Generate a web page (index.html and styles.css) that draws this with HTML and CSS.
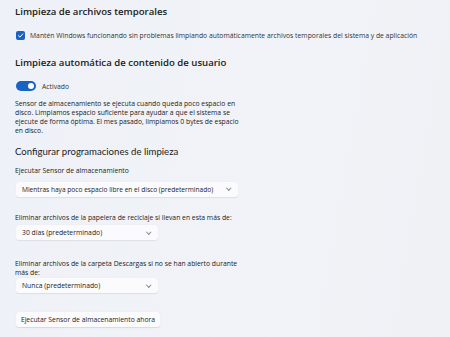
FILE: index.html
```html
<!DOCTYPE html>
<html lang="es">
<head>
  <meta charset="UTF-8" />
  <title>Sensor de almacenamiento</title>
  <link rel="stylesheet" href="styles.css">
</head>
<body>
  <h2 class="title">Limpieza de archivos temporales</h2>
  <label class="check-row">
    <span class="checkbox">
      <svg width="7" height="7" viewBox="0 0 10 10"><path d="M2 5.2 L4.2 7.3 L8.2 2.8" fill="none" stroke="#fff" stroke-width="1.4" stroke-linecap="round" stroke-linejoin="round"/></svg>
    </span>
    Mantén Windows funcionando sin problemas limpiando automáticamente archivos temporales del sistema y de aplicación
  </label>

  <h2 class="title second">Limpieza automática de contenido de usuario</h2>
  <div class="toggle-row">
    <span class="toggle"><span class="knob"></span></span>
    Activado
  </div>
  <p class="desc">Sensor de almacenamiento se ejecuta cuando queda poco espacio en disco. Limpiamos espacio suficiente para ayudar a que el sistema se ejecute de forma óptima. El mes pasado, limpiamos 0 bytes de espacio en disco.</p>

  <h3 class="subtitle">Configurar programaciones de limpieza</h3>

  <div class="field first">
    <div class="label">Ejecutar Sensor de almacenamiento</div>
    <div class="select wide">Mientras haya poco espacio libre en el disco (predeterminado) <span class="chev"></span></div>
  </div>

  <div class="field">
    <div class="label">Eliminar archivos de la papelera de reciclaje si llevan en esta más de:</div>
    <div class="select">30 días (predeterminado) <span class="chev"></span></div>
  </div>

  <div class="field last">
    <div class="label">Eliminar archivos de la carpeta Descargas si no se han abierto durante más de:</div>
    <div class="select">Nunca (predeterminado) <span class="chev"></span></div>
  </div>

  <button class="run">Ejecutar Sensor de almacenamiento ahora</button>
</body>
</html>
```

FILE: styles.css
```css
body {
  margin: 0;
  padding: 4px 0 0 15px;
  background: linear-gradient(100deg, #eef1f7 0%, #f1f3f8 60%, #eff1f5 100%);
  color: #1b1b1b;
  font-family: 'Open Sans', sans-serif;
  font-size: 6.8px;
  height: 337px;
  box-sizing: border-box;
  overflow: hidden;
}
.title {
  margin: 0;
  font-size: 9.6px;
  font-weight: 600;
  line-height: 16px;
  color: #202020;
}
.title.second {
  margin-top: 15px;
}
.check-row {
  display: flex;
  align-items: center;
  gap: 5px;
  margin-top: 11px;
  padding-left: 1px;
  color: #333;
}
.checkbox {
  width: 9px;
  height: 9px;
  border-radius: 2px;
  background: #1863c4;
  display: flex;
  align-items: center;
  justify-content: center;
}
.toggle-row {
  display: flex;
  align-items: center;
  gap: 6px;
  margin-top: 10px;
  padding-left: 1px;
  color: #333;
}
.toggle {
  width: 20px;
  height: 10px;
  border-radius: 5px;
  background: #1863c4;
  position: relative;
}
.knob {
  position: absolute;
  right: 2px;
  top: 2px;
  width: 6px;
  height: 6px;
  border-radius: 50%;
  background: #fff;
}
.desc {
  margin: 8px 0 0;
  width: 224px;
  line-height: 9px;
  color: #222;
}
.subtitle {
  margin: 10px 0 0;
  font-family: 'Lato', sans-serif;
  font-size: 9.6px;
  font-weight: 400;
  line-height: 14px;
  color: #222;
}
.field {
  margin-top: 20px;
}
.field.first {
  margin-top: 8px;
}
.field.first + .field {
  margin-top: 17px;
}
.label {
  width: 226px;
  line-height: 8.5px;
  color: #222;
}
.select {
  margin-top: 3px;
  margin-left: 1px;
  width: 142px;
  height: 15px;
  box-sizing: border-box;
  background: #fbfbfd;
  border-radius: 3px;
  box-shadow: 0 0.5px 1px rgba(0, 0, 0, 0.08);
  display: flex;
  align-items: center;
  justify-content: space-between;
  padding: 0 8px 0 6px;
  color: #222;
}
.select.wide {
  margin-top: 6px;
  width: 222px;
  font-size: 6.6px;
}
.last .select {
  margin-top: 1px;
}
.chev {
  width: 2.5px;
  height: 2.5px;
  border-right: 0.8px solid #888;
  border-bottom: 0.8px solid #888;
  transform: rotate(45deg);
  margin-top: -2px;
}
.run {
  margin: 19px 0 0 1px;
  width: 144px;
  height: 15px;
  background: #fbfbfd;
  border: none;
  border-radius: 3px;
  box-shadow: 0 0.5px 1px rgba(0, 0, 0, 0.1);
  font-family: 'Open Sans', sans-serif;
  font-size: 6.8px;
  color: #222;
  padding: 0;
}
```
